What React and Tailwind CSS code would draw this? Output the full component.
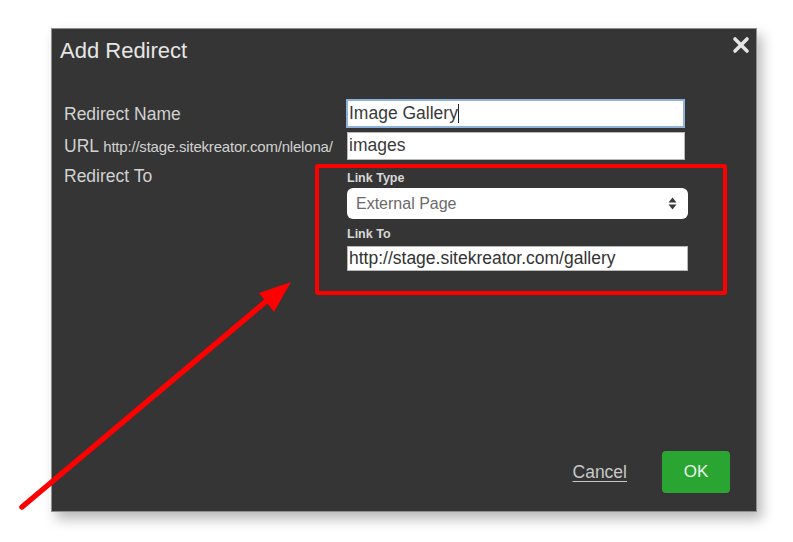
import React from "react";

const font = { fontFamily: '"Liberation Sans", Arial, sans-serif' };

function CloseIcon() {
  return (
    <svg width="18" height="18" viewBox="0 0 18 18" className="block">
      <path d="M3 3 L15 15 M15 3 L3 15" stroke="#e4e4e4" strokeWidth="3.6" strokeLinecap="round" />
    </svg>
  );
}

function SelectArrows() {
  return (
    <svg width="9" height="13" viewBox="0 0 9 13" className="block">
      <path d="M4.5 0.5 L8.5 5.5 L0.5 5.5 Z" fill="#3a3a3a" />
      <path d="M4.5 12.5 L8.5 7.5 L0.5 7.5 Z" fill="#3a3a3a" />
    </svg>
  );
}

function Arrow() {
  // red annotation arrow drawn over the page
  return (
    <svg width="793" height="542" viewBox="0 0 793 542" className="absolute inset-0 pointer-events-none">
      <line x1="22" y1="507" x2="270" y2="298" stroke="#ff0000" strokeWidth="5.5" strokeLinecap="round" />
      <polygon points="291,282 259,293 274,312" fill="#ff0000" />
    </svg>
  );
}

export default function App() {
  return (
    <div className="relative w-[793px] h-[542px] bg-white overflow-hidden" style={font}>
      <div className="pt-[28px] pl-[51px]">
        <div className="w-[706px] h-[484px] bg-[#343534] border border-[#8f8f8f] shadow-[5px_7px_12px_rgba(0,0,0,0.28)] flex flex-col">
          {/* Header */}
          <div className="flex items-start justify-between pl-[8px] pr-[6px] pt-[7px]">
            <h1 className="mt-[2px] text-[22px] leading-[26px] text-[#e6e6e6]">Add Redirect</h1>
            <button className="mt-0">
              <CloseIcon />
            </button>
          </div>

          {/* Form */}
          <div className="mt-[35px] flex flex-col gap-[4px] pl-[12px]">
            <div className="flex items-center">
              <label className="w-[283px] text-[17.5px] leading-[24px] text-[#d2d2d2]">Redirect Name</label>
              <div className="w-[339px] h-[29px] ml-[-1px] bg-white border-2 border-[#8fb2dc] flex items-center px-[1px]">
                <span className="text-[17.5px] text-[#3a3a3a] leading-none">Image Gallery</span>
                <span className="w-[1px] h-[19px] bg-[#222]" />
              </div>
            </div>
            <div className="flex items-center">
              <label className="w-[283px] text-[17.5px] leading-[24px] text-[#d2d2d2] whitespace-nowrap">
                URL <span className="text-[15px] tracking-[-0.2px]">http://stage.sitekreator.com/nlelona/</span>
              </label>
              <div className="w-[338px] h-[28px] bg-white border border-[#b8b8b8] flex items-center px-[1px]">
                <span className="text-[17.5px] text-[#3a3a3a] leading-none">images</span>
              </div>
            </div>
            <div className="flex items-start">
              <label className="w-[251px] text-[17.5px] leading-[24px] text-[#d2d2d2]">Redirect To</label>
              <div className="w-[412px] border-[4px] border-[#ff0000] rounded-[3px] pl-[28px] pr-[35px] pt-[2px] pb-[20px]">
                <div className="text-[12.5px] leading-[16px] font-bold text-[#d8d8d8]">Link Type</div>
                <div className="mt-[2px] h-[31px] bg-white rounded-[6px] flex items-center justify-between pl-[9px] pr-[11px]">
                  <span className="text-[16px] text-[#6a6a6a]">External Page</span>
                  <SelectArrows />
                </div>
                <div className="mt-[7px] text-[12.5px] leading-[16px] font-bold text-[#d8d8d8]">Link To</div>
                <div className="mt-[4px] h-[25px] bg-white border border-[#b8b8b8] flex items-center px-[1px]">
                  <span className="text-[17.5px] text-[#333] leading-none">http://stage.sitekreator.com/gallery</span>
                </div>
              </div>
            </div>
          </div>

          {/* Footer */}
          <div className="mt-auto flex items-center justify-end gap-[35px] pr-[26px] pb-[18px]">
            <a className="text-[17.5px] text-[#c8c8c8] underline underline-offset-[3px]">Cancel</a>
            <button className="w-[68px] h-[42px] rounded-[4px] bg-[#2aa532] text-[17px] text-[#eaf6ea]">OK</button>
          </div>
        </div>
      </div>
      <Arrow />
    </div>
  );
}
